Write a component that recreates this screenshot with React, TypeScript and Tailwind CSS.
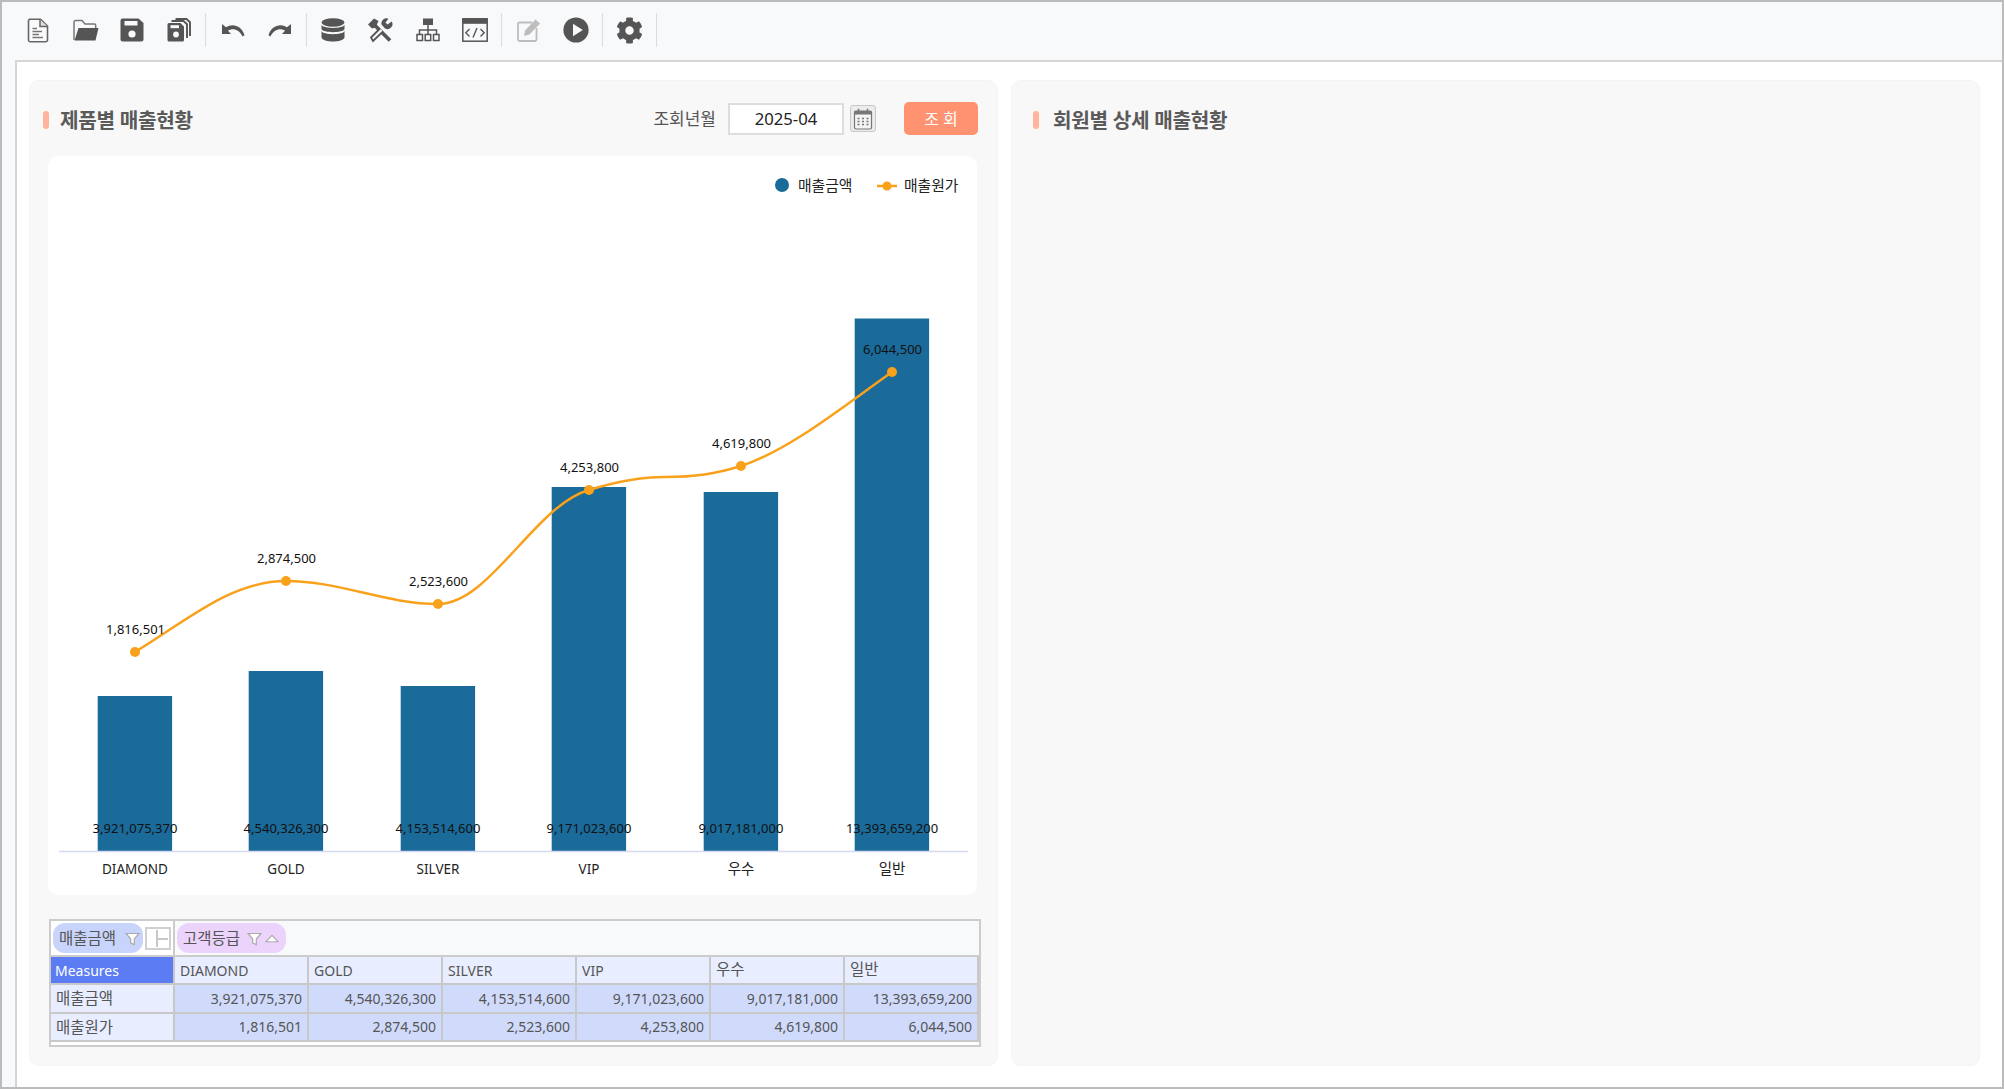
import React from "react";
import { FaCog } from "react-icons/fa";

const D = "#555555";

const DocIcon = () => (
  <svg width="22" height="25" viewBox="0 0 22 25">
    <path d="M2.5 1.2H13.5L20.5 8V22a1.8 1.8 0 0 1-1.8 1.8H3.3A1.8 1.8 0 0 1 1.5 22V2.5Z" fill="#fafafa" stroke="#666" strokeWidth="1.6" />
    <path d="M13 1.5V8.5H20.5" fill="#ddd" stroke="#666" strokeWidth="1.5" />
    <path d="M5.5 10.5H10M5.5 13.5H15M5.5 16.5H12M5.5 19.5H16" stroke="#777" strokeWidth="1.4" />
  </svg>
);
const FolderIcon = () => (
  <svg width="26" height="23" viewBox="0 0 26 23" className="ml-[2px]">
    <path d="M1 21V3a1.5 1.5 0 0 1 1.5-1.5H9L12 5H21.5a1.2 1.2 0 0 1 1.2 1.2V9" fill="none" stroke="#777" strokeWidth="1.5" />
    <path d="M5.5 9H25.5L22.5 21.5H1.5Z" fill={D} />
  </svg>
);
const SaveIcon = () => (
  <svg width="24" height="24" viewBox="0 0 24 24">
    <path d="M2.5 .5H18.5L23.5 5V21a2.5 2.5 0 0 1-2.5 2.5H3A2.5 2.5 0 0 1 .5 21V2.5A2 2 0 0 1 2.5 .5Z" fill={D} />
    <rect x="4.5" y="3" width="13" height="4.5" fill="#f8f9fb" />
    <circle cx="12" cy="16" r="3.6" fill="#f8f9fb" />
  </svg>
);
const SaveAllIcon = () => (
  <svg width="24" height="24" viewBox="0 0 24 24">
    <path d="M.5 6.5A1.5 1.5 0 0 1 2 5H13.5L17 8.5V22a1.5 1.5 0 0 1-1.5 1.5H2A1.5 1.5 0 0 1 .5 22Z" fill={D} />
    <rect x="3.5" y="7.2" width="8.5" height="3" fill="#f8f9fb" />
    <circle cx="9" cy="16.5" r="2.9" fill="#f8f9fb" />
    <path d="M4.5 3H16.5L20 6.2V20" fill="none" stroke={D} strokeWidth="1.9" />
    <path d="M8.5 1H19.5L23 4.2V18" fill="none" stroke={D} strokeWidth="1.9" />
  </svg>
);
const UndoIcon = ({ flip }: { flip?: boolean }) => (
  <svg width="24" height="14" viewBox="0 0 24 14" className={flip ? "-scale-x-100" : ""}>
    <path d="M1 1V11H10L7 7.7C11 5 18 5.5 21.5 13.5L23.5 12.2C21 3 11.5 -.5 5 4.3Z" fill={D} />
  </svg>
);
const DbIcon = () => (
  <svg width="24" height="24" viewBox="0 0 24 24" className="-ml-[1px]">
    <ellipse cx="12" cy="4.5" rx="11.5" ry="4.2" fill={D} />
    <path d="M.5 6.8C2 11 22 11 23.5 6.8V11C22 15.2 2 15.2 .5 11Z" fill={D} />
    <path d="M.5 13C2 17.2 22 17.2 23.5 13V19.5C22 24.8 2 24.8 .5 19.5Z" fill={D} />
  </svg>
);
const ToolsIcon = () => (
  <svg width="26" height="25" viewBox="0 0 25 25" className="-ml-[2px]">
    <path d="M6 6L22.5 22.5" stroke={D} strokeWidth="3.8" />
    <path d="M.5 6.5L6.5 .5L11 3L8 9.5L4.5 10.5Z" fill={D} />
    <path d="M12.5 10.5L3.5 19.5L5.5 23L15.5 13.5" fill="#f8f9fb" stroke={D} strokeWidth="1.8" />
    <path d="M14 6.5A5 5 0 0 1 21 .8L18 4.5L20 6.5L24.2 3.5A5 5 0 0 1 17.5 10.5Z" fill={D} />
  </svg>
);
const SitemapIcon = () => (
  <svg width="24" height="24" viewBox="0 0 24 24">
    <rect x="7" y=".5" width="10" height="6.5" fill={D} />
    <path d="M12 7V12M3.5 16V12H20.5V16M12 12V16" fill="none" stroke={D} strokeWidth="1.5" />
    <rect x="1" y="16.5" width="5.5" height="6" fill="none" stroke={D} strokeWidth="1.5" />
    <rect x="9.2" y="16.5" width="5.5" height="6" fill="none" stroke={D} strokeWidth="1.5" />
    <rect x="17.5" y="16.5" width="5.5" height="6" fill="none" stroke={D} strokeWidth="1.5" />
  </svg>
);
const CodeIcon = () => (
  <svg width="26" height="24" viewBox="0 0 26 24">
    <rect x=".8" y=".8" width="24.4" height="22.4" fill="#f8f9fb" stroke={D} strokeWidth="1.5" />
    <rect x=".8" y=".8" width="24.4" height="5" fill={D} />
    <path d="M7.5 11L3.8 14.8L7.5 18.5M18.5 11L22.2 14.8L18.5 18.5M15 10L11 19.5" fill="none" stroke={D} strokeWidth="1.4" />
  </svg>
);
const EditIcon = () => (
  <svg width="24" height="24" viewBox="0 0 24 24">
    <path d="M15 4.5H2.5A1.5 1.5 0 0 0 1 6V21.5A1.5 1.5 0 0 0 2.5 23H18A1.5 1.5 0 0 0 19.5 21.5V10" fill="none" stroke="#bdbdbd" strokeWidth="1.8" />
    <path d="M8 12.5L18.5 1.5L23 5.5L12.5 16.5L7 18Z" fill="#bdbdbd" />
  </svg>
);
const PlayIcon = () => (
  <svg width="26" height="26" viewBox="0 0 26 26">
    <circle cx="13" cy="13" r="12.6" fill={D} />
    <path d="M10 6.8L19.8 13L10 19.2Z" fill="#f8f9fb" />
  </svg>
);
const CalIcon = () => (
  <svg width="20" height="22" viewBox="0 0 20 22">
    <rect x="1.5" y="3" width="17" height="18" rx="1.5" fill="#f4f4f4" stroke="#777" strokeWidth="1.2" />
    <rect x="1.5" y="3" width="17" height="3.5" fill="#777" />
    <path d="M5.5 .8V4.5M14.5 .8V4.5" stroke="#777" strokeWidth="1.5" />
    <path d="M4.5 10.5H6.5M9 10.5H11M13.5 10.5H15.5M4.5 13.5H6.5M9 13.5H11M13.5 13.5H15.5M4.5 16.5H6.5M9 16.5H11M13.5 16.5H15.5" stroke="#777" strokeWidth="1.4" />
  </svg>
);
const FilterIcon = () => (
  <svg width="15" height="14" viewBox="0 0 15 14">
    <path d="M1 1.5H14L9.3 7V12.5L5.7 11V7Z" fill="#fff" stroke="#a9a9a9" strokeWidth="1.2" />
  </svg>
);

const Sep = () => <div className="mx-[3px] h-[34px] w-px bg-[#dcdcdc]" />;
const Slot = ({ children }: { children: React.ReactNode }) => (
  <div className="flex h-[34px] w-[47px] items-center justify-center">{children}</div>
);

const SectionTitle = ({ text, gap }: { text: string; gap: string }) => (
  <div className={`flex items-center pt-[4px] ${gap}`}>
    <div className="h-[18px] w-[6px] rounded-[3px] bg-[#ffb49c]" />
    <span className="text-[20.2px] font-bold tracking-[-0.3px] text-[#5a5a5a]">{text}</span>
  </div>
);

const cats = [
  { n: "DIAMOND", c: 135, top: 696, sales: "3,921,075,370", cost: "1,816,501", py: 652 },
  { n: "GOLD", c: 286, top: 671, sales: "4,540,326,300", cost: "2,874,500", py: 581 },
  { n: "SILVER", c: 438, top: 686, sales: "4,153,514,600", cost: "2,523,600", py: 604 },
  { n: "VIP", c: 589, top: 487, sales: "9,171,023,600", cost: "4,253,800", py: 490 },
  { n: "우수", c: 741, top: 492, sales: "9,017,181,000", cost: "4,619,800", py: 466 },
  { n: "일반", c: 892, top: 318.5, sales: "13,393,659,200", cost: "6,044,500", py: 372 },
];

const Chart = () => (
  <svg width="929" height="739" viewBox="48 156 929 739" className="block">
    <circle cx="782" cy="185" r="7" fill="#1a6a9a" />
    <text x="798" y="190.5" fontSize="14.8" fill="#222">매출금액</text>
    <path d="M877 186H897" stroke="#f9a11b" strokeWidth="2.5" />
    <circle cx="887" cy="186" r="4.5" fill="#f9a11b" />
    <text x="904" y="190.5" fontSize="14.8" fill="#222">매출원가</text>

    {cats.map((k) => (
      <rect key={k.n} x={k.c - 37.3} y={k.top} width="74.4" height={851 - k.top} fill="#1a6a9a" />
    ))}
    <path d="M59 851.5H968" stroke="#d5daf0" strokeWidth="1.6" />
    <path
      d="M135 652C185 622 230 581 286 581C340 581 385 604 438 604C490 604 535 505 589 490C615 482 640 477 665 477C695 477 715 474 741 466C790 450 845 405 892 372"
      fill="none"
      stroke="#f9a11b"
      strokeWidth="2.5"
    />
    {cats.map((k) => (
      <circle key={k.n} cx={k.c} cy={k.py} r="5" fill="#f9a11b" />
    ))}
    {cats.map((k) => (
      <text key={k.n} x={k.c + 0.5} y={k.py - 18} textAnchor="middle" fontSize="13" fill="#111">{k.cost}</text>
    ))}
    {cats.map((k) => (
      <text key={k.n} x={k.c} y="833.4" textAnchor="middle" fontSize="13" fill="#111">{k.sales}</text>
    ))}
    {cats.map((k) => (
      <text key={k.n} x={k.c} y="874" textAnchor="middle" fontSize={k.n === "우수" || k.n === "일반" ? 14.5 : 13.5} fill="#222">{k.n}</text>
    ))}
  </svg>
);

const cell = "flex items-center border-r-2 border-b-2 border-[#c8c8c8] px-[5px] text-[14px] text-[#555]";

const Pivot = () => (
  <div className="ml-px flex h-[128px] w-[932px] flex-col border-2 border-[#cccccc] bg-[#f8f9fb]">
    <div className="flex h-[36px] border-b-2 border-[#cccccc]">
      <div className="flex h-full w-[124px] items-center gap-[2px] border-r-2 border-[#cccccc] bg-white pl-[2px]">
        <div className="flex h-[30px] w-[90px] shrink-0 items-center justify-between rounded-[12px] bg-[#c8d4fb] pl-[6px] pr-[3px] pt-px text-[15.5px] text-[#555]">
          <span>매출금액</span>
          <FilterIcon />
        </div>
        <div className="flex h-[23px] w-[26px] shrink-0 border-2 border-[#d0d0d0] bg-white p-px">
          <div className="w-[10px] border-r-2 border-[#c8c8c8]" />
          <div className="mt-[8px] h-[2px] flex-1 bg-[#c8c8c8]" />
        </div>
      </div>
      <div className="ml-[2px] flex items-center">
        <div className="flex h-[30px] w-[109px] items-center rounded-[12px] bg-[#ecd3fb] pl-[6px] pt-px text-[15.5px] text-[#555]">
          <span>고객등급</span>
          <span className="ml-[7px] flex"><FilterIcon /></span>
          <svg width="14" height="9" viewBox="0 0 13 8" className="ml-[3px]">
            <path d="M1 7L6.5 1L12 7Z" fill="#fff" stroke="#aaa" />
          </svg>
        </div>
      </div>
    </div>
    <div className="grid h-[85px] grid-cols-[124px_repeat(6,1fr)] grid-rows-[28px_28.5px_28.5px]">
      <div className="flex items-center border-r-2 border-b-2 border-[#c8c8c8] bg-[#5c7cf3] px-[4px] text-[14px] text-white">Measures</div>
      {cats.map((k) => (
        <div key={k.n} className={`${cell} bg-[#e8eeff] ${k.n === "우수" || k.n === "일반" ? "text-[15.5px]" : "text-[14.5px]"}`}>{k.n}</div>
      ))}
      <div className={`${cell} bg-[#e8eeff] px-[4px] pt-px text-[15.5px]`}>매출금액</div>
      {cats.map((k) => (
        <div key={k.n} className={`${cell} justify-end bg-[#d0dbfc]`}>{k.sales}</div>
      ))}
      <div className={`${cell} bg-[#e8eeff] px-[4px] pt-px text-[15.5px]`}>매출원가</div>
      {cats.map((k) => (
        <div key={k.n} className={`${cell} justify-end bg-[#d0dbfc]`}>{k.cost}</div>
      ))}
    </div>
    <div className="flex-1 bg-white" />
  </div>
);

export default function App() {
  return (
    <div className="flex h-[1089px] w-[2004px] flex-col overflow-hidden border-2 border-[#bbbbbb] bg-[#f8f9fb] font-['Noto_Sans','Noto_Sans_CJK_KR',sans-serif]">
      <div className="flex h-[58px] shrink-0 items-center pb-[2px] pl-[12px]">
        <Slot><DocIcon /></Slot>
        <Slot><FolderIcon /></Slot>
        <Slot><SaveIcon /></Slot>
        <Slot><SaveAllIcon /></Slot>
        <Sep />
        <Slot><UndoIcon /></Slot>
        <Slot><UndoIcon flip /></Slot>
        <Sep />
        <Slot><DbIcon /></Slot>
        <Slot><ToolsIcon /></Slot>
        <Slot><SitemapIcon /></Slot>
        <Slot><CodeIcon /></Slot>
        <Sep />
        <Slot><EditIcon /></Slot>
        <Slot><PlayIcon /></Slot>
        <Sep />
        <Slot><FaCog size={27} color={D} /></Slot>
        <Sep />
      </div>
      <div className="ml-[12.5px] flex min-h-0 flex-1 gap-[13px] border-l-2 border-t-2 border-[#d5d5d5] bg-white pb-[21px] pl-[12.5px] pr-[22px] pt-[18px]">
        <div className="flex w-[969px] flex-col rounded-[10px] border border-[#f4f4f8] bg-[#f8f8f8] pl-[18px]">
          <div className="flex h-[75px] shrink-0 items-center justify-between pr-[19px]">
            <div className="-ml-[5px]"><SectionTitle text="제품별 매출현황" gap="gap-[11px]" /></div>
            <div className="flex items-center">
              <span className="text-[17px] text-[#555]">조회년월</span>
              <div className="ml-[12px] flex h-[32px] w-[116px] items-center justify-center border-2 border-[#dddddd] bg-white text-[16.7px] text-[#222]">2025-04</div>
              <button className="ml-[6px] flex h-[27px] w-[26px] items-center justify-center rounded-[3px] border border-[#c8c8c8] bg-[#ececec]"><CalIcon /></button>
              <button className="ml-[28px] flex h-[33px] w-[74px] items-center justify-center rounded-[5px] bg-[#ff9270] text-[16px] text-white">조 회</button>
            </div>
          </div>
          <div className="w-[929px] overflow-hidden rounded-[10px] bg-white"><Chart /></div>
          <div className="mt-[24px]"><Pivot /></div>
        </div>
        <div className="flex w-[969px] flex-col rounded-[10px] border border-[#f4f4f8] bg-[#f8f8f8] pl-[21px]">
          <div className="flex h-[75px] shrink-0 items-center">
            <SectionTitle text="회원별 상세 매출현황" gap="gap-[14px]" />
          </div>
        </div>
      </div>
    </div>
  );
}
